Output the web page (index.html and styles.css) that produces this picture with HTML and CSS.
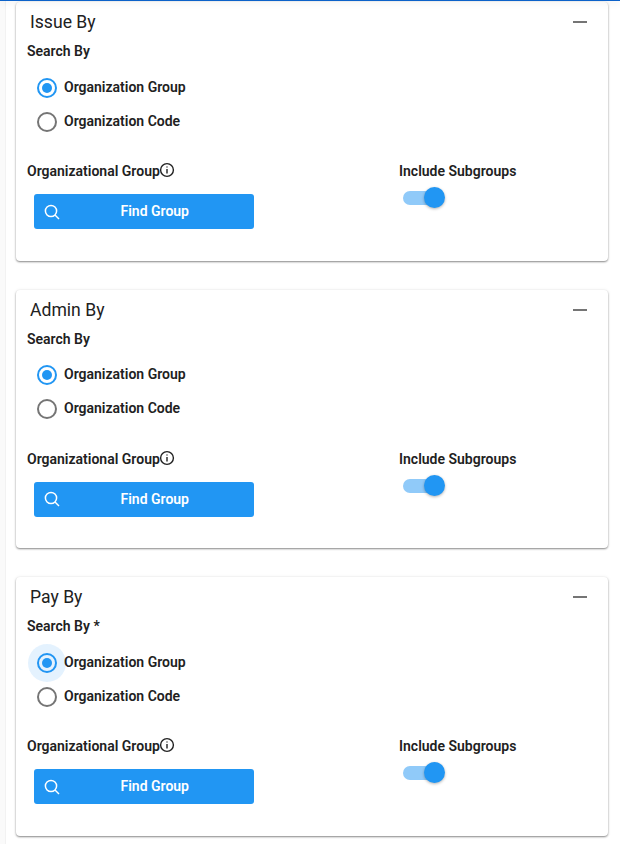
FILE: index.html
```html
<!DOCTYPE html>
<html lang="en">
<head>
<meta charset="utf-8">
<title>Filters</title>
<link rel="stylesheet" href="styles.css">
</head>
<body>
<div class="topbar"></div>
<main class="page">
  <section class="card">
    <header class="card-head"><h2>Issue By</h2><span class="collapse"></span></header>
    <div class="label">Search By</div>
    <div class="radios">
      <div class="radio-row"><span class="radio on"></span><span class="radio-text">Organization Group</span></div>
      <div class="radio-row"><span class="radio"></span><span class="radio-text">Organization Code</span></div>
    </div>
    <div class="columns">
      <div class="col-left">
        <div class="label group-label">Organizational Group<svg class="info" viewBox="0 0 16 16"><circle cx="8" cy="8" r="6.4"/><path d="M8 7v4.4M8 4.4v1.2"/></svg></div>
        <button class="find"><svg class="search" viewBox="0 0 16 16"><circle cx="7" cy="7" r="5.6"/><path d="M11 11l4 4"/></svg><span>Find Group</span></button>
      </div>
      <div class="col-right">
        <div class="label">Include Subgroups</div>
        <div class="switch"><span class="track"></span><span class="thumb"></span></div>
      </div>
    </div>
  </section>
  <section class="card">
    <header class="card-head"><h2>Admin By</h2><span class="collapse"></span></header>
    <div class="label">Search By</div>
    <div class="radios">
      <div class="radio-row"><span class="radio on"></span><span class="radio-text">Organization Group</span></div>
      <div class="radio-row"><span class="radio"></span><span class="radio-text">Organization Code</span></div>
    </div>
    <div class="columns">
      <div class="col-left">
        <div class="label group-label">Organizational Group<svg class="info" viewBox="0 0 16 16"><circle cx="8" cy="8" r="6.4"/><path d="M8 7v4.4M8 4.4v1.2"/></svg></div>
        <button class="find"><svg class="search" viewBox="0 0 16 16"><circle cx="7" cy="7" r="5.6"/><path d="M11 11l4 4"/></svg><span>Find Group</span></button>
      </div>
      <div class="col-right">
        <div class="label">Include Subgroups</div>
        <div class="switch"><span class="track"></span><span class="thumb"></span></div>
      </div>
    </div>
  </section>
  <section class="card">
    <header class="card-head"><h2>Pay By</h2><span class="collapse"></span></header>
    <div class="label">Search By *</div>
    <div class="radios">
      <div class="radio-row"><span class="radio on focus"></span><span class="radio-text">Organization Group</span></div>
      <div class="radio-row"><span class="radio"></span><span class="radio-text">Organization Code</span></div>
    </div>
    <div class="columns">
      <div class="col-left">
        <div class="label group-label">Organizational Group<svg class="info" viewBox="0 0 16 16"><circle cx="8" cy="8" r="6.4"/><path d="M8 7v4.4M8 4.4v1.2"/></svg></div>
        <button class="find"><svg class="search" viewBox="0 0 16 16"><circle cx="7" cy="7" r="5.6"/><path d="M11 11l4 4"/></svg><span>Find Group</span></button>
      </div>
      <div class="col-right">
        <div class="label">Include Subgroups</div>
        <div class="switch"><span class="track"></span><span class="thumb"></span></div>
      </div>
    </div>
  </section>
</main>
</body>
</html>
```
FILE: styles.css
```css
* { box-sizing: border-box; }
html, body { margin: 0; height: 844px; overflow: hidden; background: #fff; }
body { font-family: Roboto, "Liberation Sans", sans-serif; color: #212121; }
.topbar {
  position: fixed; top: 0; left: 0; right: 0; height: 1px;
  background: #0d62c9;
  box-shadow: 0 1px 7px rgba(0,0,0,.22);
  z-index: 2;
}
.page {
  margin-left: 5px;
  padding: 2px 12px 0 10px;
  height: 844px;
  border-left: 1px solid #f2f2f2;
  box-shadow: -5px 0 0 #fafafa;
  display: flex; flex-direction: column; gap: 29px;
}
.card {
  height: 258.6px;
  flex: none;
  background: #fff;
  border-radius: 4px;
  box-shadow: 0 1px 2px rgba(0,0,0,.45), 0 0 4px rgba(0,0,0,.06);
  padding: 0 11px;
}
.card-head {
  display: flex; align-items: center; justify-content: space-between;
  height: 39.2px;
  padding: 0 10px 0 3px;
}
h2 { margin: 0.8px 0 0; font-size: 17.6px; font-weight: 400; line-height: 24px; }
.collapse { width: 14px; height: 2px; background: #757575; margin-top: 0.8px; }
.label { font-size: 14px; font-weight: 600; line-height: 20px; }
.radios { padding: 8.4px 0 0 10px; }
.radio-row { display: flex; align-items: center; height: 34px; }
.radio {
  position: relative;
  width: 20px; height: 20px; border-radius: 50%;
  border: 2px solid #757575;
  margin: 2px 7px 0 0;
  flex: none;
}
.radio.on { border-color: #2196f3; }
.radio.on::after {
  content: ""; position: absolute; left: 3px; top: 3px;
  width: 10px; height: 10px; border-radius: 50%; background: #2196f3;
}
.radio.focus::before {
  content: ""; position: absolute; left: -11px; top: -11px;
  width: 38px; height: 38px; border-radius: 50%; background: rgba(33,150,243,.12);
}
.radio-text { font-size: 14px; font-weight: 600; position: relative; }
.columns { display: flex; margin-top: 23.6px; }
.col-left { width: 372px; }
.group-label { display: flex; align-items: center; }
.info { width: 16px; height: 16px; fill: none; stroke: #212121; stroke-width: 1.4; margin: -2px 0 0 -1px; }
.find {
  display: flex; align-items: center;
  width: 220px; height: 35px;
  margin: 13px 0 0 7px; padding: 0 0 0 9.5px;
  background: #2196f3; border: 0; border-radius: 3px;
  color: #fff; font: 600 14px Roboto, "Liberation Sans", sans-serif;
}
.find span { flex: 1; text-align: center; padding: 0 4px 1px 0; }
.search { width: 16px; height: 16px; fill: none; stroke: #fff; stroke-width: 1.5; }
.switch { position: relative; width: 42px; height: 22px; margin: 5px 0 0 4px; }
.track { position: absolute; left: 0; top: 5px; width: 34px; height: 14px; border-radius: 7px; background: #90caf9; }
.thumb {
  position: absolute; left: 21px; top: 1px;
  width: 21px; height: 21px; border-radius: 50%; background: #2196f3;
  box-shadow: 0 1px 3px rgba(0,0,0,.3);
}
```
